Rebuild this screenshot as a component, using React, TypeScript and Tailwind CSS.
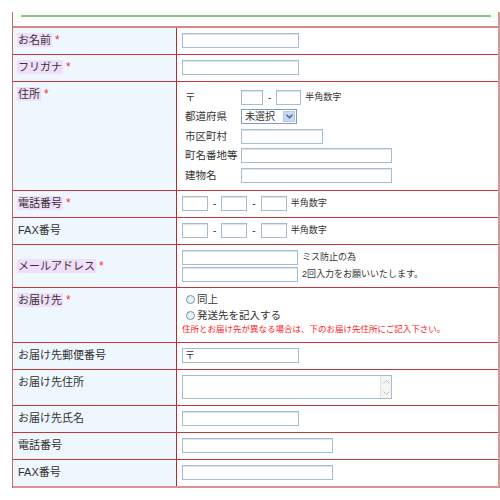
import React from "react";

const font = { fontFamily: '"Liberation Sans", "Noto Sans CJK JP", sans-serif' };

function Label({ text, required }: { text: string; required?: boolean }) {
  if (!required)
    return <div className="pl-px h-[14px] text-[11px] leading-[14px] text-[#333]">{text}</div>;
  return (
    <div className="flex items-center h-[14px] leading-[14px]">
      <span className="bg-[#f1defa] px-px h-[14px] text-[11px] leading-[14px] text-[#333]">{text}</span>
      <span className="ml-[3px] text-[12px] leading-[14px] text-[#ff3030]">*</span>
    </div>
  );
}

function Input({ w }: { w: string }) {
  return <div className={`${w} h-[15px] border border-[#a6bcd4] bg-white shadow-[inset_0_1px_0_#dde6ef]`} />;
}

function Row({
  label,
  required,
  h,
  center,
  last,
  children,
}: {
  label: string;
  required?: boolean;
  h: string;
  center?: boolean;
  last?: boolean;
  children: React.ReactNode;
}) {
  return (
    <div className={`flex ${h} ${last ? "" : "border-b border-[#c2373a]"}`}>
      <div
        className={`w-[164px] shrink-0 bg-[#eef6fe] border-r border-[#b52a2c] pl-[4px] flex leading-[14px] ${
          center ? "items-center" : "items-start pt-[5px]"
        }`}
      >
        <Label text={label} required={required} />
      </div>
      <div className="flex-1 pl-[5px] pt-[5px] leading-[15px]">{children}</div>
    </div>
  );
}

function Dash() {
  return <span className="mx-[5px] text-[10px] leading-[15px] text-[#333]">-</span>;
}

function Note({ text }: { text: string }) {
  return <span className="ml-[4px] text-[9px] leading-[15px] text-[#333]">{text}</span>;
}

function Radio({ text }: { text: string }) {
  return (
    <div className="flex items-center h-[16px] pl-[4px]">
      <span className="w-[9px] h-[9px] rounded-full border border-[#6d8fb3] bg-gradient-to-br from-[#e4ebf3] to-white" />
      <span className="ml-[2px] text-[10.5px] leading-[16px] text-[#333]">{text}</span>
    </div>
  );
}

export default function App() {
  return (
    <div className="w-[500px] h-[500px] bg-white pt-3 pl-3" style={font}>
      <div className="w-[488px] border-l border-[#c46a6a] border-r-2 border-r-[#d99494]">
        <div className="h-[14px] pt-[3px] pl-[8px] pr-[7px]">
          <div className="h-[2px] bg-[#8cc084]" />
        </div>
        <div className="border-t-2 border-[#d58a8a] border-b-2 border-b-[#d99494]">
          <Row label="お名前" required h="h-[27px]">
            <Input w="w-[117px]" />
          </Row>
          <Row label="フリガナ" required h="h-[27px]">
            <Input w="w-[117px]" />
          </Row>
          <Row label="住所" required h="h-[109px]">
            <div className="pl-[3px] pt-[2px] text-[10.5px] text-[#333]">
              <div className="flex items-center h-[17px]">
                <span className="w-[56px]">〒</span>
                <Input w="w-[22px]" />
                <Dash />
                <Input w="w-[25px]" />
                <Note text="半角数字" />
              </div>
              <div className="flex items-center h-[20px]">
                <span className="w-[56px]">都道府県</span>
                <div className="w-[56px] h-[15px] border border-[#7f9db9] bg-white flex items-center justify-between pl-[3px] pr-px">
                  <span className="text-[10px] leading-[13px]">未選択</span>
                  <span className="w-[12px] h-[11px] bg-[#c8d8f6] border border-[#b2c6ec] flex items-center justify-center">
                    <svg width="7" height="5" viewBox="0 0 7 5">
                      <path d="M0.5 0.8 L3.5 3.8 L6.5 0.8" fill="none" stroke="#4d6185" strokeWidth="1.4" />
                    </svg>
                  </span>
                </div>
              </div>
              <div className="flex items-center h-[20px]">
                <span className="w-[56px]">市区町村</span>
                <Input w="w-[82px]" />
              </div>
              <div className="flex items-center h-[19px]">
                <span className="w-[56px]">町名番地等</span>
                <Input w="w-[151px]" />
              </div>
              <div className="flex items-center h-[20px]">
                <span className="w-[56px]">建物名</span>
                <Input w="w-[151px]" />
              </div>
            </div>
          </Row>
          <Row label="電話番号" required h="h-[27px]">
            <div className="flex items-center">
              <Input w="w-[26px]" />
              <Dash />
              <Input w="w-[26px]" />
              <Dash />
              <Input w="w-[26px]" />
              <Note text="半角数字" />
            </div>
          </Row>
          <Row label="FAX番号" h="h-[27px]">
            <div className="flex items-center">
              <Input w="w-[26px]" />
              <Dash />
              <Input w="w-[26px]" />
              <Dash />
              <Input w="w-[26px]" />
              <Note text="半角数字" />
            </div>
          </Row>
          <Row label="メールアドレス" required center h="h-[43px]">
            <div className="flex flex-col gap-[2px]">
              <div className="flex items-center">
                <Input w="w-[116px]" />
                <Note text="ミス防止の為" />
              </div>
              <div className="flex items-center">
                <Input w="w-[116px]" />
                <Note text="2回入力をお願いいたします。" />
              </div>
            </div>
          </Row>
          <Row label="お届け先" required h="h-[55px]">
            <div className="-mt-[2px]">
              <Radio text="同上" />
              <Radio text="発送先を記入する" />
              <div className="text-[8.5px] leading-[13px] text-[#ff2020]">
                住所とお届け先が異なる場合は、下のお届け先住所にご記入下さい。
              </div>
            </div>
          </Row>
          <Row label="お届け先郵便番号" h="h-[27px]">
            <div className="w-[117px] h-[15px] border border-[#a6bcd4] bg-white pl-[2px] text-[10px] leading-[13px] text-[#333]">
              〒
            </div>
          </Row>
          <Row label="お届け先住所" h="h-[36px]">
            <div className="w-[210px] h-[24px] border border-[#a6bcd4] bg-white flex justify-end">
              <div className="w-[11px] flex flex-col bg-[#f4f4f0] border-l border-[#e4e4de]">
                <div className="h-[11px] flex items-center justify-center">
                  <svg width="7" height="4" viewBox="0 0 7 4">
                    <path d="M0.5 3.5 L3.5 0.5 L6.5 3.5" fill="none" stroke="#b8bdc4" strokeWidth="1" />
                  </svg>
                </div>
                <div className="flex-1" />
                <div className="h-[11px] flex items-center justify-center">
                  <svg width="7" height="4" viewBox="0 0 7 4">
                    <path d="M0.5 0.5 L3.5 3.5 L6.5 0.5" fill="none" stroke="#b8bdc4" strokeWidth="1" />
                  </svg>
                </div>
              </div>
            </div>
          </Row>
          <Row label="お届け先氏名" h="h-[27px]">
            <Input w="w-[117px]" />
          </Row>
          <Row label="電話番号" h="h-[27px]">
            <Input w="w-[151px]" />
          </Row>
          <Row label="FAX番号" last h="h-[26px]">
            <Input w="w-[151px]" />
          </Row>
        </div>
      </div>
    </div>
  );
}
